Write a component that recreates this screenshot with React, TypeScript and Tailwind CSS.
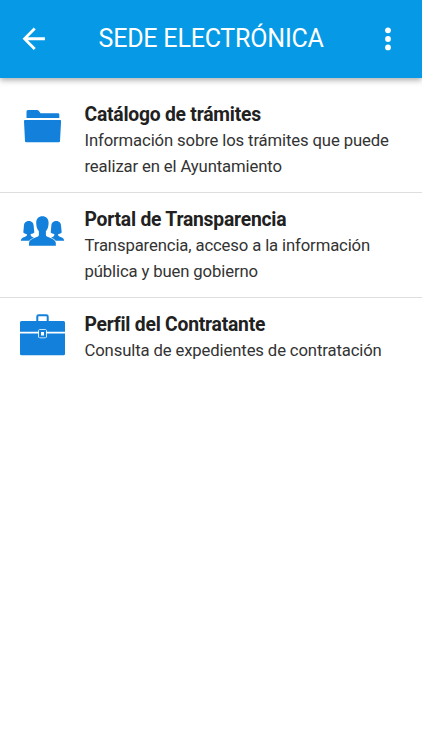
import type { ReactNode } from "react"

const FolderIcon = () => (
    <svg viewBox="0 0 48 48" className="w-12 h-12" fill="#1380dc">
        <path d="M8.500 18v-6.500q0-1.500 1.500-1.500h9q1 0 1.700.8l1.800 2.500h17.500q1.300 0 1.300 1.300V18z" />
        <path d="M7 20h35.200q1 0 .9 1L42 41.200q-.1 1.100-1.200 1.100H8.200q-1.100 0-1.200-1.100L6 21q0-1 1-1z" />
    </svg>
)

const GroupIcon = () => (
    <svg viewBox="0 0 48 48" className="w-12 h-12" fill="#1380dc">
        <path d="M24.400 11.300c3.800 0 6.200 2.500 6.200 6.500 0 4.200-1.200 6.700-2.700 8.500v3.600c0 2.600 9 3.200 9.800 7.300l.2 3.500H10.900l.2-3.500c.8-4.100 9.800-4.700 9.800-7.300v-3.600c-1.500-1.800-2.700-4.300-2.700-8.500 0-4 2.400-6.500 6.200-6.500z" />
        <path id="side" d="M10.800 15.900c3.400 0 4.900 2.300 4.900 5.300l.6 6.400q-.9 1.300-3.600 1.500v1.200q0 1.200 3.200 2.400-3.500 1-4.600 3H2.800q.2-2.300 2.200-3.200 3.900-1.400 3.900-2.300v-1q-2.700-.2-3.600-1.600l.6-6.400c0-3 1.500-5.300 4.900-5.300z" />
        <use href="#side" transform="matrix(-1 0 0 1 49 0)" />
    </svg>
)

const BriefcaseIcon = () => (
    <svg viewBox="0 0 48 48" className="w-12 h-12" fill="#1380dc">
        <path d="M19.300 11V6.600q0-1.300 1.300-1.300h7.800q1.300 0 1.300 1.300V11" fill="none" stroke="#1380dc" strokeWidth="2" />
        <path d="M3.500 11h42q1.500 0 1.500 1.500v9.300H2v-9.300Q2 11 3.500 11z" />
        <path d="M2 23.600h45v20.200q0 1.500-1.500 1.500h-42Q2 45.300 2 43.800z" />
        <rect x="20.200" y="19.200" width="8.600" height="9" rx="1.800" fill="#fff" />
        <path d="M21 20h7v7.500h-7zM23 22v3.500h3V22z" fillRule="evenodd" />
    </svg>
)

const items: { title: string; text: string; icon: ReactNode }[] = [
    { title: "Catálogo de trámites", text: "Información sobre los trámites que puede realizar en el Ayuntamiento", icon: <FolderIcon /> },
    { title: "Portal de Transparencia", text: "Transparencia, acceso a la información pública y buen gobierno", icon: <GroupIcon /> },
    { title: "Perfil del Contratante", text: "Consulta de expedientes de contratación", icon: <BriefcaseIcon /> },
]

const App = () => {
    return (
        <div className="w-full h-screen bg-white font-['Roboto',sans-serif] text-[#212121] overflow-hidden">
            <header className="h-[77.500px] bg-[#069ae6] flex items-center pl-[17px] pr-[31.500px] text-white shadow-[0_2px_6px_rgba(0,0,0,0.35)]">
                <svg viewBox="0 0 24 24" className="w-[33.500px] h-[33.500px]" fill="currentColor">
                    <path d="M20 11H7.830l5.590-5.590L12 4l-8 8 8 8 1.410-1.410L7.830 13H20v-2z" />
                </svg>
                <h1 className="flex-1 pl-[48px] text-[25px] leading-8 pt-px tracking-[-0.200px] whitespace-nowrap">SEDE ELECTRÓNICA</h1>
                <svg viewBox="0 0 6 24" className="w-1.5 h-6" fill="currentColor">
                    <circle cx="3" cy="3.300" r="2.900" />
                    <circle cx="3" cy="12" r="2.900" />
                    <circle cx="3" cy="20.400" r="2.900" />
                </svg>
            </header>
            <ul className="pt-[10.500px]">
                {items.map((item) => (
                    <li key={item.title} className="flex h-[105px] pt-3 border-b border-[#dedede] last:border-0">
                        <div className="w-[84.500px] shrink-0 pl-[18px]">{item.icon}</div>
                        <div className="flex-1 pr-6 pt-[1.500px]">
                            <h2 className="text-[19.300px] leading-[26px] tracking-[-0.220px] font-bold [font-variant-ligatures:none]">{item.title}</h2>
                            <p className="text-[16.700px] leading-[26px] tracking-[-0.130px] text-[#333]">{item.text}</p>
                        </div>
                    </li>
                ))}
            </ul>
        </div>
    )
}

export default App
